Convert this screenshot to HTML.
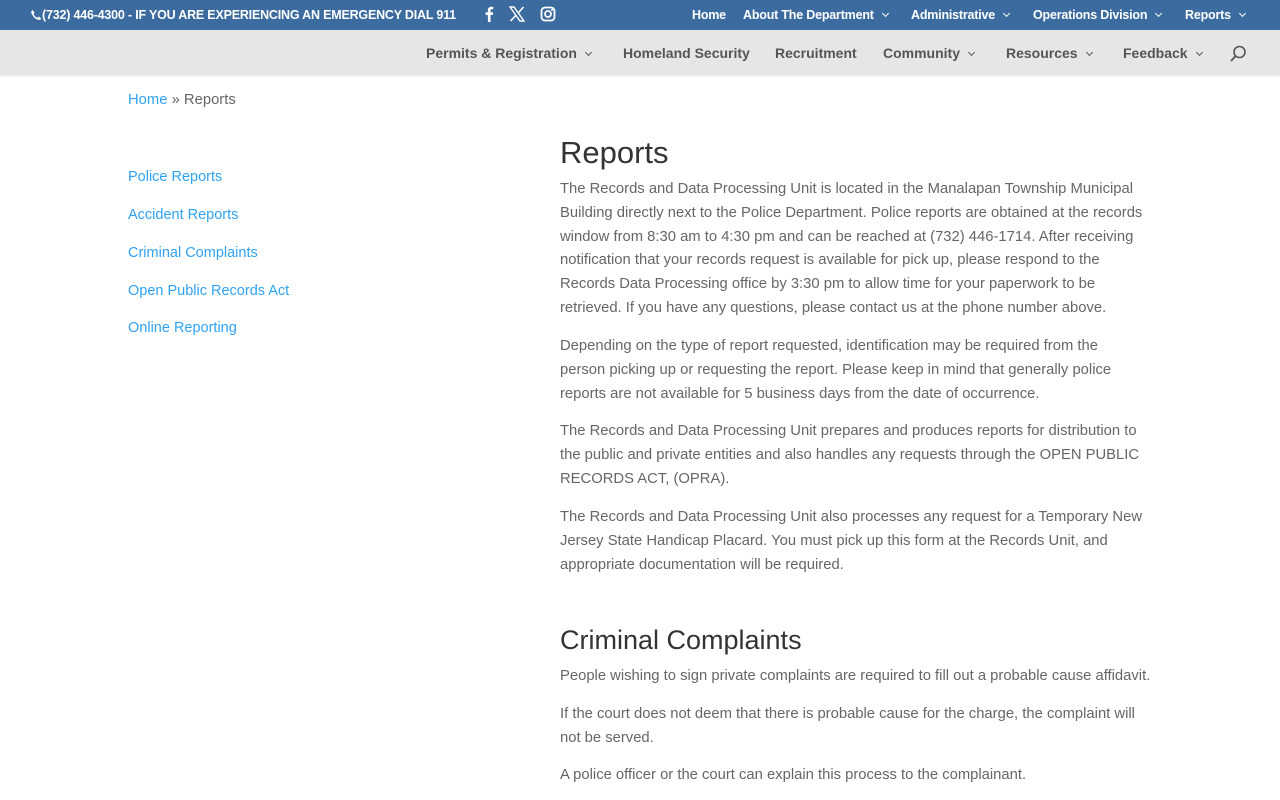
<!DOCTYPE html>
<html><head><meta charset="utf-8"><style>
*{margin:0;padding:0;box-sizing:border-box}
body{width:1280px;height:800px;overflow:hidden;background:#fff;font-family:"Liberation Sans",Arial,sans-serif;color:#666}
.top{position:absolute;left:0;top:0;width:1280px;height:30px;background:#3c6b9f;color:#fff;font-weight:bold;font-size:12.5px}
.top span{position:absolute;top:8px;white-space:nowrap;letter-spacing:-0.2px}
.nav{position:absolute;top:30px;left:0;width:1280px;height:45px;background:#e6e6e6;box-shadow:0 1px 2px rgba(0,0,0,.1)}
.nav span{position:absolute;top:15px;font-weight:bold;font-size:14px;color:#555;white-space:nowrap}
.chev{display:inline-block;width:5px;height:5px;border-right:1.5px solid currentColor;border-bottom:1.5px solid currentColor;transform:rotate(45deg);margin-left:9px;position:relative;top:-3px}
.a{color:#2ea3f2;text-decoration:none}
.side{position:absolute;left:128px;font-size:14.5px;color:#2ea3f2}
.c{position:absolute;left:560px;font-size:14.8px;line-height:23.8px;white-space:nowrap}
h1,h2{position:absolute;left:560px;font-weight:normal;color:#333;white-space:nowrap}
</style></head><body>
<div class="top">
<span style="left:30px"><svg width="12" height="12" viewBox="0 0 12 12" style="vertical-align:-2px"><path d="M2.5 1 L4.5 3.5 L3.5 5 Q5 8 7.5 8.7 L9 7.5 L11.2 9.5 L10 11 Q4 11 1 3 Z" fill="#fff"/></svg>(732) 446-4300 - IF YOU ARE EXPERIENCING AN EMERGENCY DIAL 911</span>
<svg style="position:absolute;left:484px;top:6px" width="10" height="16" viewBox="0 0 10 16"><path d="M6.5 16V9h2.3l.4-2.7H6.5V4.6c0-.8.3-1.3 1.4-1.3h1.4V.9C9 .8 8.2.7 7.3.7 5.3.7 3.9 1.9 3.9 4.2v2.1H1.6V9h2.3v7z" fill="#fff"/></svg>
<svg style="position:absolute;left:509px;top:6px" width="16" height="16" viewBox="0 0 16 16"><path d="M1 1h4l10 14h-4z" fill="none" stroke="#fff" stroke-width="1.4"/><path d="M14.5 1L9.2 7M6.8 9.5L1.5 15" stroke="#fff" stroke-width="1.6"/></svg>
<svg style="position:absolute;left:540px;top:6px" width="16" height="16" viewBox="0 0 16 16"><rect x="1.5" y="1.5" width="13" height="13" rx="3.5" fill="none" stroke="#fff" stroke-width="1.8"/><circle cx="8" cy="8" r="3" fill="none" stroke="#fff" stroke-width="1.8"/><circle cx="12" cy="4" r="1" fill="#fff"/></svg>
<span style="left:692px">Home</span>
<span style="left:743px">About The Department<i class="chev"></i></span>
<span style="left:911px">Administrative<i class="chev"></i></span>
<span style="left:1033px">Operations Division<i class="chev"></i></span>
<span style="left:1185px">Reports<i class="chev"></i></span>
</div>
<div class="nav">
<span style="left:426px">Permits &amp; Registration<i class="chev"></i></span>
<span style="left:623px">Homeland Security</span>
<span style="left:775px">Recruitment</span>
<span style="left:883px">Community<i class="chev"></i></span>
<span style="left:1006px">Resources<i class="chev"></i></span>
<span style="left:1123px">Feedback<i class="chev"></i></span>
<svg style="position:absolute;left:1229px;top:15px" width="18" height="18" viewBox="0 0 18 18"><circle cx="10.5" cy="7" r="5.5" fill="none" stroke="#555" stroke-width="1.6"/><path d="M6.5 11L2 16" stroke="#555" stroke-width="1.8"/></svg>
</div>
<div style="position:absolute;left:128px;top:92px;font-size:14.8px;color:#666"><span class="a">Home</span> » Reports</div>
<div class="side" style="top:169px">Police Reports</div>
<div class="side" style="top:207px">Accident Reports</div>
<div class="side" style="top:245px">Criminal Complaints</div>
<div class="side" style="top:283px">Open Public Records Act</div>
<div class="side" style="top:320px">Online Reporting</div>
<h1 style="top:135px;font-size:31px">Reports</h1>
<div class="c" style="top:178px">The Records and Data Processing Unit is located in the Manalapan Township Municipal<br>Building directly next to the Police Department. Police reports are obtained at the records<br>window from 8:30 am to 4:30 pm and can be reached at (732) 446-1714. After receiving<br>notification that your records request is available for pick up, please respond to the<br>Records Data Processing office by 3:30 pm to allow time for your paperwork to be<br>retrieved. If you have any questions, please contact us at the phone number above.</div>
<div class="c" style="top:335px">Depending on the type of report requested, identification may be required from the<br>person picking up or requesting the report. Please keep in mind that generally police<br>reports are not available for 5 business days from the date of occurrence.</div>
<div class="c" style="top:420px">The Records and Data Processing Unit prepares and produces reports for distribution to<br>the public and private entities and also handles any requests through the OPEN PUBLIC<br>RECORDS ACT, (OPRA).</div>
<div class="c" style="top:506px">The Records and Data Processing Unit also processes any request for a Temporary New<br>Jersey State Handicap Placard. You must pick up this form at the Records Unit, and<br>appropriate documentation will be required.</div>
<h2 style="top:625px;font-size:27px">Criminal Complaints</h2>
<div class="c" style="top:665px">People wishing to sign private complaints are required to fill out a probable cause affidavit.</div>
<div class="c" style="top:703px">If the court does not deem that there is probable cause for the charge, the complaint will<br>not be served.</div>
<div class="c" style="top:764px">A police officer or the court can explain this process to the complainant.</div>
</body></html>
